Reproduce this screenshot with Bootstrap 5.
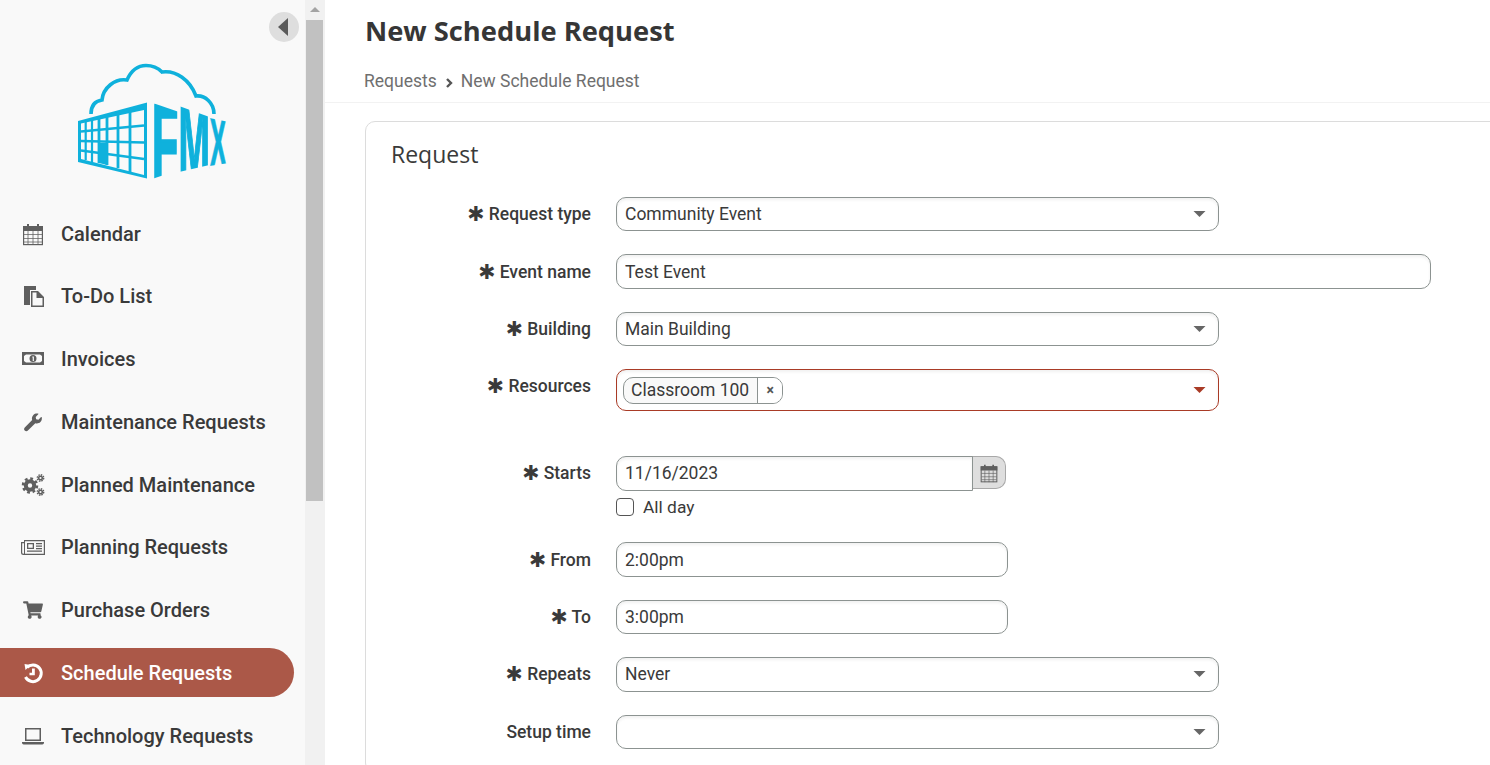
<!DOCTYPE html>
<html lang="en">
<head>
    <meta charset="UTF-8">
    <title>New Schedule Request</title>
    <link rel="stylesheet" href="https://cdn.jsdelivr.net/npm/bootstrap@5.3.2/dist/css/bootstrap.min.css">
    <style>
        html, body { height: 765px; overflow: hidden; }
        body { font-family: Roboto, "Liberation Sans", sans-serif; color: #3a3a3a; background: #fff; }

        /* sidebar */
        .side-wrap { width: 305px; height: 765px; background: #f9f9f9; flex: none; position: relative; overflow: hidden; }
        .side-logo { display: block; width: 305px; height: 208.5px; }
        .side-collapse { position: absolute; left: 269px; top: 12px; width: 30px; height: 30px; border-radius: 50%; background: #dedede; border: 0; padding: 0; }
        .side-collapse::before { content: ""; position: absolute; left: 9px; top: 6px; border-style: solid; border-width: 9px 10px 9px 0; border-color: transparent #5a5a5a transparent transparent; }
        .side-nav { gap: 13.75px; }
        .side-nav .nav-link { height: 49px; width: 294px; padding: 1px 0 0 21px; gap: 16px; color: #3a3a3a; font-size: 20px; font-weight: 500; border-radius: 0 25px 25px 0; }
        .side-nav .nav-link.active { background: #ab5848; color: #fff; }
        .side-ico { width: 24px; height: 24px; flex: none; fill: #5f5f5f; }
        .active .side-ico { fill: #fff; }

        /* fake scrollbar */
        .scroll-track { width: 20px; height: 765px; flex: none; background: #f1f1f1; }
        .scroll-up { height: 20px; padding-top: 7px; }
        .scroll-up::before { content: ""; display: block; margin: 0 auto; width: 0; border-style: solid; border-width: 0 5px 5px; border-color: transparent transparent #a3a3a3; }
        .scroll-thumb { margin: 0 2px 0 1px; height: 481px; background: #c1c1c1; }

        /* header */
        .page-main { overflow: hidden; min-width: 0; }
        .page-head { height: 103px; padding: 12px 0 0 39px; border-bottom: 1px solid #f2f2f2; }
        .page-title { font-family: "Open Sans", sans-serif; font-weight: 700; font-size: 27.3px; line-height: 38px; margin: 0 0 0 1px; color: #363636; }
        .crumbs { font-size: 17.5px; line-height: 24px; margin-top: 19px; color: #6f6f6f; gap: 8px; }
        .crumb-sep { width: 8px; height: 10px; fill: none; stroke: #555; stroke-width: 2.4; margin-top: 3px; }

        /* request card */
        .req-card { margin: 18px 0 0 40px; width: 1300px; border-color: #dcdcdc; border-radius: 10px; padding: 13px 25px 0; }
        .req-title { font-family: "Open Sans", sans-serif; font-size: 23px; font-weight: 400; line-height: 38px; margin: 0 0 24px; color: #3a3a3a; }
        .req-row { margin-bottom: 23px; }
        .req-row.wide-gap { margin-bottom: 45px; }
        .req-label { width: 200px; margin-right: 25px; flex: none; text-align: right; padding-top: 5.3px; font-size: 17.5px; line-height: 24px; font-weight: 500; color: #3a3a3a; }
        .req-star { font-family: "DejaVu Sans", sans-serif; font-size: 20.5px; line-height: 20px; font-weight: 700; vertical-align: -1px; }
        .req-ctl, .req-ctl.form-select { height: 34.4px; border: 1px solid #8c9391; border-radius: 10px; font-size: 17.5px; line-height: 24px; padding: 4px 8px; color: #3a3a3a; box-shadow: inset 0 2px 3px rgba(0, 0, 0, .06); }
        .req-ctl.form-select { background-image: url("data:image/svg+xml,%3csvg xmlns='http://www.w3.org/2000/svg' viewBox='0 0 12 6'%3e%3cpath fill='%23666' d='M0 0h12L6 6z'/%3e%3c/svg%3e"); background-size: 13px 6px; background-position: right 12px center; }
        .w-select { width: 603px; }
        .w-text { width: 815px; }
        .w-time { width: 392px; }
        .res-box.form-select { height: 42px; border-color: #a93b26; padding: 3px 6px; background-image: url("data:image/svg+xml,%3csvg xmlns='http://www.w3.org/2000/svg' viewBox='0 0 12 6'%3e%3cpath fill='%23a93b26' d='M0 0h12L6 6z'/%3e%3c/svg%3e"); }
        .res-tag { height: 27px; border: 1px solid #8c9391; border-radius: 10px; background: #f9f9f9; line-height: 25px; overflow: hidden; }
        .res-tag span:first-child { padding: 0 8px 0 7px; border-right: 1px solid #8c9391; }
        .res-tag span:last-child { width: 24px; text-align: center; font-size: 14px; font-weight: 700; color: #555; background: #fff; }
        .date-group { width: 390px; }
        .date-group .req-ctl { border-radius: 10px 0 0 10px; flex: none; width: 357px; }
        .date-btn { width: 34px; height: 33px; padding: 0; justify-content: center; background: #dedede; border: 1px solid #a8a8a8; border-left: 0; border-radius: 0 10px 10px 0; }
        .date-btn svg { width: 20px; height: 20px; }
        .allday { margin: 6px 0 0; padding: 0; min-height: 0; gap: 9px; font-size: 17.4px; line-height: 20px; font-weight: 400; color: #3a3a3a; }
        .allday .form-check-input { float: none; margin: 0; width: 18px; height: 18px; border: 1px solid #555; border-radius: 4px; }
        .req-row.allday-gap { margin-bottom: 25.8px; }
        .cal-lines { fill: none; stroke: #5f5f5f; stroke-width: 1; opacity: .75; }
    </style>
</head>
<body class="d-flex">

<!-- Sidebar -->
<div class="side-wrap">
    <svg class="side-logo" viewBox="0 0 305 208.500" aria-label="FMX">
        <polygon points="78,121 149,102 149,179 78,162" fill="#0fb1dc"/>
        <polygon points="81,123.500 144,110 144,175 81,159" fill="#f9f9f9"/>
        <g stroke="#0fb1dc" fill="none">
            <path stroke-width="2.600" d="M81 131.500L144 125.500M81 141L144 142.500M81 150.500L144 159"/>
            <path stroke-width="2.200" d="M85.700 120V160M92 118V162"/>
            <path stroke-width="2.800" d="M99 118V163M107 116V165M118 112V168M130 110V172"/>
        </g>
        <polygon points="99,143 107,143 107,165 99,163" fill="#0fb1dc"/>
        <polygon points="149,102 149,179 147,179 147,102" fill="#f9f9f9"/>
        <g fill="#0fb1dc" stroke="#0fb1dc" font-family="'Liberation Sans',sans-serif" font-weight="700">
            <text transform="translate(152 181) scale(.39 1)" font-size="110" stroke-width="3">F</text>
            <text transform="translate(178.500 178) scale(.36 1)" font-size="105" stroke-width="2">M</text>
            <text transform="translate(209.500 168) scale(.36 1)" font-size="72" stroke-width="1">X</text>
        </g>
        <!-- trims the letters to the perspective of the logo -->
        <g fill="#f9f9f9">
            <polygon points="150,92 179,92 179,112 150,102"/>
            <polygon points="152,179 179,170 179,195 150,195"/>
            <polygon points="179,92 209.500,92 209.500,117 179,106"/>
            <polygon points="179,172 209.500,165 209.500,185 179,185"/>
            <polygon points="209.500,105 229,105 229,122 209.500,118"/>
            <polygon points="209.500,166 229,163 229,175 209.500,175"/>
        </g>
        <path d="M91 114C91 106 95 101 102 100C103 88 115 78 127 80C131 71 138 65.500 146 65.500C153 65.500 158 68 162 72C176 70 190 80 196 96C205 95 214 103 214 114" fill="none" stroke="#0fb1dc" stroke-width="3.600"/>
    </svg>
    <button class="side-collapse" type="button" aria-label="Collapse"></button>

    <nav class="nav flex-column side-nav">
        <a class="nav-link d-flex align-items-center" href="#">
            <svg class="side-ico" viewBox="0 0 24 24"><path d="M6 2h2v2h8V2h2v2h4v5H2V4h4z"/><rect x="2.600" y="4.600" width="18.800" height="18" fill="none" stroke="#5f5f5f" stroke-width="1.200"/><path class="cal-lines" d="M3 12.500h18M3 16.500h18M3 20h18M7 9v14M12 9v14M17 9v14"/></svg>
            Calendar
        </a>
        <a class="nav-link d-flex align-items-center" href="#">
            <svg class="side-ico" viewBox="0 0 24 24"><path d="M3 2h12v4H9v15H3z"/><path fill-rule="evenodd" d="M10 7h7l6 6v10H10zm1.500 1.500v13h10V14h-6V8.500z"/></svg>
            To-Do List
        </a>
        <a class="nav-link d-flex align-items-center" href="#">
            <svg class="side-ico" viewBox="0 0 24 24"><path fill-rule="evenodd" d="M1 5h22v13H1zm4 2.500L3 9v5l2 1.500h14L21 14V9l-2-1.500zM12 8a3.500 3.500 0 1 1 0 7 3.500 3.500 0 0 1 0-7zm-.7 1.500v1h.4V14h1.200V9.500z"/></svg>
            Invoices
        </a>
        <a class="nav-link d-flex align-items-center" href="#">
            <svg class="side-ico" viewBox="-90 -100 692 692"><path d="M507.730 109.100c-2.240-9.030-13.540-12.090-20.120-5.510l-74.360 74.360-67.880-11.310-11.310-67.880 74.360-74.360c6.620-6.620 3.430-17.900-5.660-20.160-47.380-11.740-99.550.910-136.580 37.930-39.640 39.640-50.550 97.100-34.050 147.200L18.740 402.760c-24.990 24.990-24.990 65.510 0 90.500 24.990 24.990 65.510 24.990 90.500 0l213.210-213.210c50.120 16.710 107.470 5.680 147.370-34.220 37.070-37.070 49.700-89.320 37.910-136.730z"/></svg>
            Maintenance Requests
        </a>
        <a class="nav-link d-flex align-items-center" href="#">
            <svg class="side-ico" viewBox="0 0 24 24"><g fill="none" stroke="#5f5f5f"><circle cx="9" cy="12.500" r="4.200" stroke-width="4"/><circle cx="9" cy="12.500" r="7" stroke-width="2.500" stroke-dasharray="2.800 2.700"/><circle cx="19.500" cy="5" r="1.800" stroke-width="1.500"/><circle cx="19.500" cy="5" r="3.200" stroke-width="1.400" stroke-dasharray="1.500 1"/><circle cx="19.500" cy="19" r="1.800" stroke-width="1.500"/><circle cx="19.500" cy="19" r="3.200" stroke-width="1.400" stroke-dasharray="1.500 1"/></g></svg>
            Planned Maintenance
        </a>
        <a class="nav-link d-flex align-items-center" href="#">
            <svg class="side-ico" viewBox="0 0 24 24"><path fill-rule="evenodd" d="M3 5h21v15H2.500A2.500 2.500 0 0 1 0 17.500V7h3zm1 1.200V18.800h18.800V6.200zM3 8.200H1.200v9.300A1.300 1.300 0 0 0 3 18.500zM6 8h7v6H6zm1.300 1.300v3.400h4.400V9.300zM15 8h6v1.300h-6zm0 2.500h6v1.300h-6zm0 2.500h6v1.300h-6zM6 15.500h15v1.300H6z"/></svg>
            Planning Requests
        </a>
        <a class="nav-link d-flex align-items-center" href="#">
            <svg class="side-ico" viewBox="-60 -70 696 652"><path d="M528.120 301.319l47.273-208C578.806 78.301 567.391 64 551.990 64H159.208l-9.166-44.810C147.758 8.021 137.930 0 126.529 0H24C10.745 0 0 10.745 0 24v16c0 13.255 10.745 24 24 24h69.883l70.248 343.435C147.325 417.100 136 435.222 136 456c0 30.928 25.072 56 56 56s56-25.072 56-56c0-15.674-6.447-29.835-16.824-40h209.647C430.447 426.165 424 440.326 424 456c0 30.928 25.072 56 56 56s56-25.072 56-56c0-22.172-12.888-41.332-31.579-50.405l5.517-24.276c3.413-15.018-8.002-29.319-23.403-29.319H218.117l-6.545-32h293.145c11.206 0 20.920-7.754 23.403-18.681z"/></svg>
            Purchase Orders
        </a>
        <a class="nav-link d-flex align-items-center active" href="#">
            <svg class="side-ico" viewBox="0 0 24 24"><path d="M3.500 3l6 1-5 5z"/><path d="M6 6.500A8.300 8.300 0 1 1 4.500 16" fill="none" stroke="#fff" stroke-width="3"/><path d="M11 7.500h2.800v6.800H8.500v-2.500H11z"/></svg>
            Schedule Requests
        </a>
        <a class="nav-link d-flex align-items-center" href="#">
            <svg class="side-ico" viewBox="0 0 24 24"><path fill-rule="evenodd" d="M4 4h16v13H4zm1.500 1.500v10h13v-10zM1 18h22v.8A1.700 1.700 0 0 1 21.300 20.500H2.700A1.700 1.700 0 0 1 1 18.800z"/></svg>
            Technology Requests
        </a>
    </nav>
</div>

<div class="scroll-track">
    <div class="scroll-up"></div>
    <div class="scroll-thumb"></div>
</div>

<!-- Main -->
<div class="page-main flex-grow-1">
    <div class="page-head">
        <h1 class="page-title">New Schedule Request</h1>
        <div class="crumbs d-flex align-items-center">
            <span>Requests</span>
            <svg class="crumb-sep" viewBox="0 0 8 10"><path d="M2 1l4 4-4 4"/></svg>
            <span>New Schedule Request</span>
        </div>
    </div>

    <div class="card req-card">
        <h2 class="req-title">Request</h2>

        <div class="d-flex req-row">
            <label class="req-label"><span class="req-star">✱</span> Request type</label>
            <select class="form-select req-ctl w-select"><option>Community Event</option></select>
        </div>
        <div class="d-flex req-row">
            <label class="req-label"><span class="req-star">✱</span> Event name</label>
            <input class="form-control req-ctl w-text" type="text" value="Test Event">
        </div>
        <div class="d-flex req-row">
            <label class="req-label"><span class="req-star">✱</span> Building</label>
            <select class="form-select req-ctl w-select"><option>Main Building</option></select>
        </div>
        <div class="d-flex req-row wide-gap">
            <label class="req-label"><span class="req-star">✱</span> Resources</label>
            <div class="form-select req-ctl res-box w-select d-flex align-items-center">
                <div class="res-tag d-inline-flex">
                    <span>Classroom 100</span><span>×</span>
                </div>
            </div>
        </div>
        <div class="d-flex req-row allday-gap">
            <label class="req-label"><span class="req-star">✱</span> Starts</label>
            <div>
                <div class="input-group date-group flex-nowrap">
                    <input class="form-control req-ctl" type="text" value="11/16/2023">
                    <span class="input-group-text date-btn">
                        <svg class="side-ico" viewBox="0 0 24 24"><path d="M6 2h2v2h8V2h2v2h4v5H2V4h4z"/><rect x="2.600" y="4.600" width="18.800" height="18" fill="none" stroke="#5f5f5f" stroke-width="1.200"/><path class="cal-lines" d="M3 12.500h18M3 16.500h18M3 20h18M7 9v14M12 9v14M17 9v14"/></svg>
                    </span>
                </div>
                <div class="form-check allday d-flex align-items-center">
                    <input class="form-check-input" type="checkbox" id="allDay">
                    <label for="allDay">All day</label>
                </div>
            </div>
        </div>
        <div class="d-flex req-row">
            <label class="req-label"><span class="req-star">✱</span> From</label>
            <input class="form-control req-ctl w-time" type="text" value="2:00pm">
        </div>
        <div class="d-flex req-row">
            <label class="req-label"><span class="req-star">✱</span> To</label>
            <input class="form-control req-ctl w-time" type="text" value="3:00pm">
        </div>
        <div class="d-flex req-row">
            <label class="req-label"><span class="req-star">✱</span> Repeats</label>
            <select class="form-select req-ctl w-select"><option>Never</option></select>
        </div>
        <div class="d-flex req-row">
            <label class="req-label">Setup time</label>
            <select class="form-select req-ctl w-select"><option></option></select>
        </div>
    </div>
</div>

<script src="https://cdn.jsdelivr.net/npm/bootstrap@5.3.2/dist/js/bootstrap.bundle.min.js"></script>
</body>
</html>
